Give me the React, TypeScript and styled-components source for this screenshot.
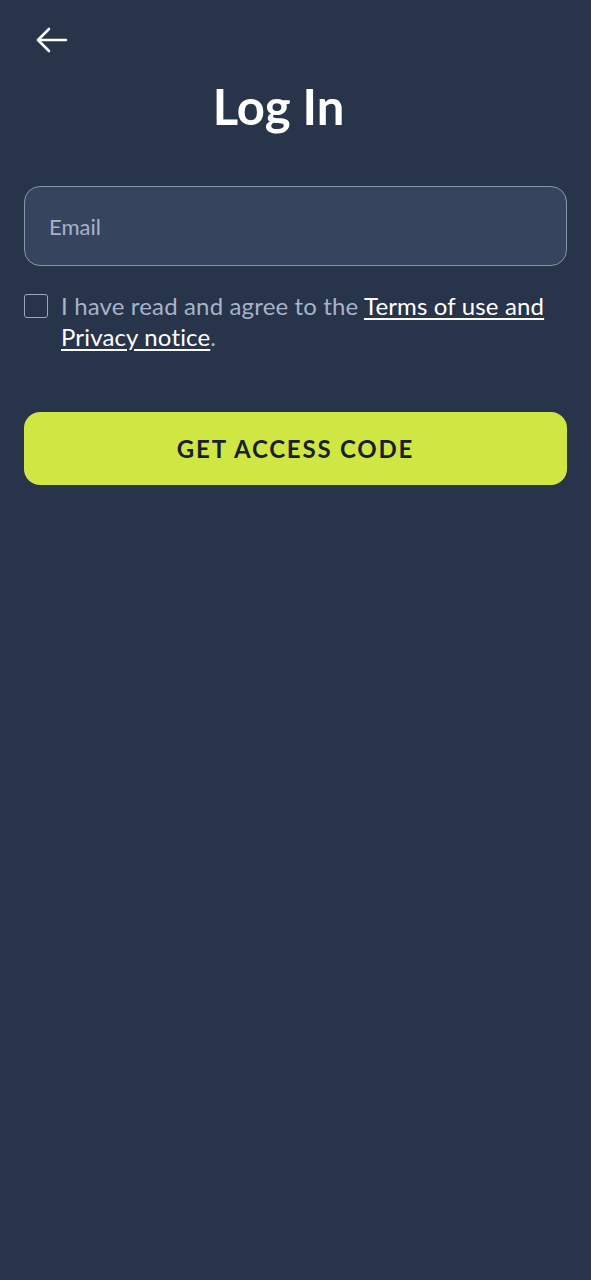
import React from 'react';
import styled, { createGlobalStyle } from 'styled-components';

const GlobalStyle = createGlobalStyle`
  html, body {
    margin: 0;
    padding: 0;
    background: #283449;
  }
  body {
    font-family: 'Lato', 'Liberation Sans', sans-serif;
  }
`;

const Screen = styled.div`
  min-height: 1280px;
  background: #283449;
  padding: 0 24px;
  box-sizing: border-box;
  display: flex;
  flex-direction: column;
`;

const Header = styled.div`
  display: flex;
  flex-direction: column;
  padding-top: 24px;
`;

const BackButton = styled.button`
  width: 40px;
  height: 32px;
  margin-left: 12px;
  padding: 0;
  border: none;
  background: none;
  color: #ffffff;
  display: flex;
  align-items: center;
  cursor: pointer;
`;

const Title = styled.h1`
  margin: 22px 0 0;
  padding-right: 34px;
  text-align: center;
  font-size: 49px;
  font-weight: 700;
  color: #ffffff;
  line-height: 56px;
`;

const EmailInput = styled.input`
  margin-top: 52px;
  height: 80px;
  box-sizing: border-box;
  border: 1px solid #8896ad;
  border-radius: 16px;
  background: #36455d;
  padding: 0 24px;
  font-family: inherit;
  font-size: 22px;
  color: #ffffff;
  outline: none;

  &::placeholder {
    color: #a6b3c9;
    opacity: 1;
  }
`;

const AgreeRow = styled.label`
  margin-top: 28px;
  display: flex;
  align-items: flex-start;
  gap: 13px;
`;

const Checkbox = styled.span`
  flex: none;
  width: 22px;
  height: 22px;
  border: 1.5px solid #9aa7bd;
  border-radius: 3px;
`;

const AgreeText = styled.span`
  font-size: 24px;
  line-height: 31px;
  letter-spacing: 0.15px;
  color: #a6b3c9;
  margin-top: -4px;
`;

const Link = styled.a`
  color: #ffffff;
  text-decoration: underline;
  text-underline-offset: 3px;
  text-decoration-thickness: 2px;
`;

const PrimaryButton = styled.button`
  margin-top: 60px;
  height: 73px;
  border: none;
  border-radius: 16px;
  background: #d0e643;
  color: #172030;
  font-family: inherit;
  font-size: 24px;
  font-weight: 700;
  letter-spacing: 1.8px;
  cursor: pointer;
`;

const App = () => {
  return (
    <Screen>
      <GlobalStyle />
      <Header>
        <BackButton aria-label="Back">
          <svg width="32" height="26" viewBox="0 0 32 26" fill="none">
            <path
              d="M30 13H3M13 2L2 13l11 11"
              stroke="#ffffff"
              strokeWidth="2.6"
              strokeLinecap="round"
              strokeLinejoin="round"
            />
          </svg>
        </BackButton>
        <Title>Log In</Title>
      </Header>
      <EmailInput placeholder="Email" />
      <AgreeRow>
        <Checkbox />
        <AgreeText>
          I have read and agree to the <Link href="#">Terms of use and Privacy notice</Link>.
        </AgreeText>
      </AgreeRow>
      <PrimaryButton>GET ACCESS CODE</PrimaryButton>
    </Screen>
  );
};

export default App;
